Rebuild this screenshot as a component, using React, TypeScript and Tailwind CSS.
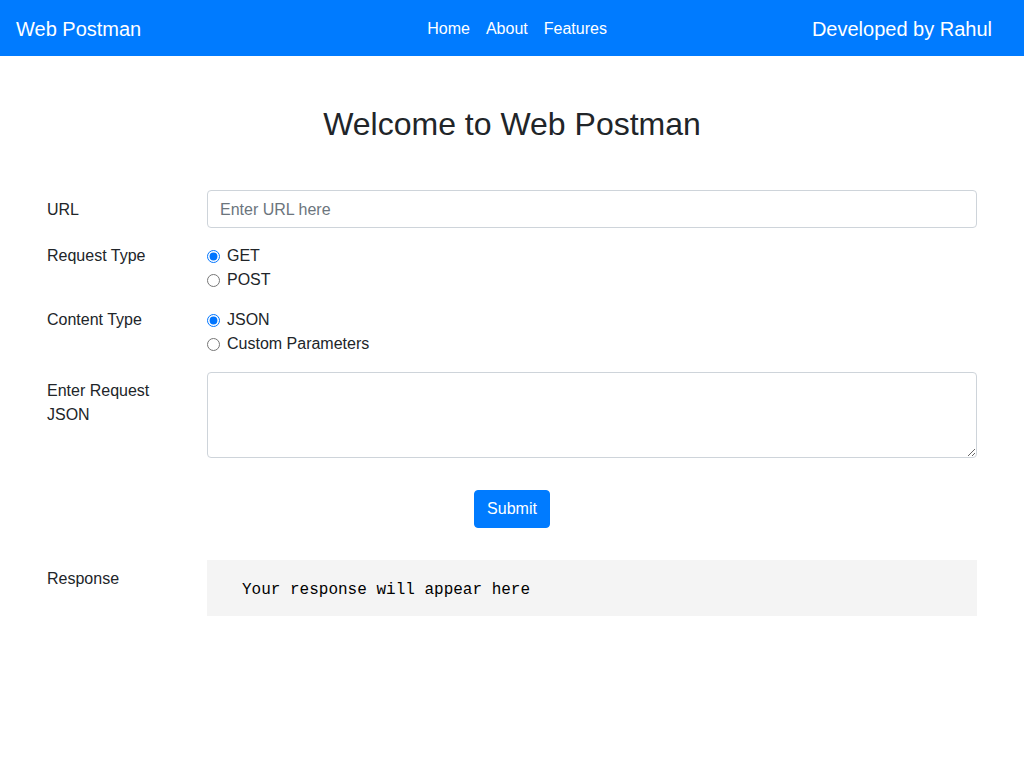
import React from "react";

const font = { fontFamily: '"Liberation Sans", Arial, sans-serif' };

function Radio({ name, label, checked }: { name: string; label: string; checked?: boolean }) {
  return (
    <label className="flex items-center h-6 text-[16px] text-[#212529]">
      <input type="radio" name={name} defaultChecked={checked} className="m-0 w-[13px] h-[13px]" />
      <span className="ml-[7px]">{label}</span>
    </label>
  );
}

export default function App() {
  return (
    <div className="min-h-[768px] bg-white" style={font}>
      <nav className="h-14 bg-[#007bff] flex items-center px-4 pt-[2px] text-white">
        <span className="text-[20px] leading-[30px]">Web Postman</span>
        <div className="flex gap-4 ml-[286px] text-[16px] leading-6">
          <a className="text-white">Home</a>
          <a className="text-white">About</a>
          <a className="text-white">Features</a>
        </div>
        <span className="ml-auto mr-4 text-[20px] leading-[30px]">Developed by Rahul</span>
      </nav>

      <div className="w-[960px] mx-auto px-[15px]">
        <h2 className="text-[32px] leading-[38px] text-[#212529] text-center mt-[49px] mb-[47px] font-normal">
          Welcome to Web Postman
        </h2>

        <div className="flex">
          <label className="w-[160px] text-[16px] leading-6 text-[#212529] pt-[8px]">URL</label>
          <input
            type="text"
            placeholder="Enter URL here"
            className="flex-1 h-[38px] border border-[#ced4da] rounded px-3 pt-[2px] text-[16px] text-[#495057] placeholder:text-[#6c757d] outline-none"
          />
        </div>

        <div className="flex mt-4">
          <div className="w-[160px] text-[16px] leading-6 text-[#212529]">Request Type</div>
          <div className="flex flex-col">
            <Radio name="req" label="GET" checked />
            <Radio name="req" label="POST" />
          </div>
        </div>

        <div className="flex mt-4">
          <div className="w-[160px] text-[16px] leading-6 text-[#212529]">Content Type</div>
          <div className="flex flex-col">
            <Radio name="ct" label="JSON" checked />
            <Radio name="ct" label="Custom Parameters" />
          </div>
        </div>

        <div className="flex mt-4">
          <label className="w-[160px] pr-[30px] text-[16px] leading-6 text-[#212529] pt-[7px]">Enter Request JSON</label>
          <textarea
            rows={3}
            className="flex-1 h-[86px] border border-[#ced4da] rounded px-3 py-[6px] text-[16px] leading-6 outline-none"
          />
        </div>

        <div className="flex justify-center mt-8">
          <button className="h-[38px] px-3 border border-[#007bff] bg-[#007bff] text-white text-[16px] rounded">Submit</button>
        </div>

        <div className="flex mt-8">
          <div className="w-[160px] text-[16px] leading-6 text-[#212529] pt-[7px]">Response</div>
          <pre
            className="flex-1 bg-[#f4f4f4] pl-[35px] pt-[18px] pb-[14px] text-[16px] leading-6 text-black m-0"
            style={{ fontFamily: '"Liberation Mono", "Courier New", monospace' }}
          >
            Your response will appear here
          </pre>
        </div>
      </div>
    </div>
  );
}
